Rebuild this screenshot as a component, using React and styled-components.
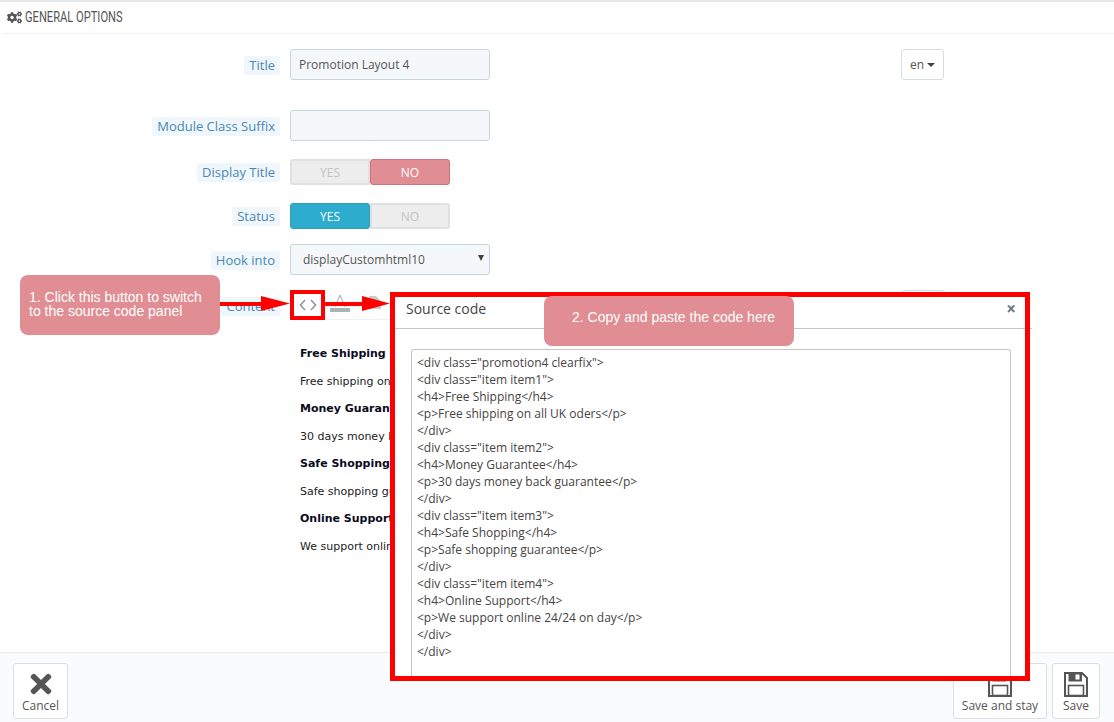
import React from "react";
import styled, { createGlobalStyle } from "styled-components";
import { FaCogs, FaTimes } from "react-icons/fa";

const Global = createGlobalStyle`
  html, body { margin: 0; padding: 0; background: #fff; }
  body { font-family: "Open Sans", "Liberation Sans", sans-serif; overflow: hidden; }
  * { box-sizing: border-box; }
`;

const Page = styled.div`
  position: relative; width: 1114px; height: 722px; overflow: hidden;
  display: flex; flex-direction: column; border-top: 2px solid #e4e8ea;
`;
const Header = styled.div`
  height: 32px; margin-left: 2px; padding-left: 5px; display: flex; align-items: center; gap: 3px;
  border-bottom: 1px solid #eef0f1; color: #555;
`;
const HeaderTitle = styled.span`
  font-family: "Roboto", sans-serif; font-size: 14px; color: #555; display: inline-block;
  transform: scaleX(.795); transform-origin: left center; white-space: nowrap; margin-top: -1px;
`;
const Form = styled.div`
  display: flex; flex-direction: column; padding-top: 15px;
`;
const Row = styled.div`
  display: flex; align-items: center; height: ${(p) => p.$h}px; margin-bottom: ${(p) => p.$mb || 0}px;
`;
const LabelCol = styled.div`
  width: 280px; display: flex; justify-content: flex-end; flex: none; padding-top: ${(p) => p.$top || 0}px;
`;
const Label = styled.span`
  background: #eff7fc; color: #4a87b5; font-size: 13px; line-height: 19px; padding: 0 5px; border-radius: 2px; white-space: nowrap;
`;
const Field = styled.div`
  margin-left: 10px; width: 200px; height: 31px; background: #f4f8fa; border: 1px solid #c7d6db; border-radius: 3px;
  font-size: 12px; color: #555; padding: 0 8px; display: flex; align-items: center; position: relative;
  flex: none;
`;
const SelectField = styled(Field)` padding-left: 12px; `;
const SelectArrow = styled.span`
  position: absolute; right: 5px; top: 10px; width: 0; height: 0;
  border-left: 3px solid transparent; border-right: 3px solid transparent; border-top: 6px solid #444;
`;
const LangBtn = styled.div`
  margin-left: 411px; width: 43px; height: 31px; border: 1px solid #d6dcdf; border-radius: 3px; color: #555; font-size: 12px;
  display: flex; align-items: center; justify-content: center; gap: 3px; background: #fff; flex: none;
`;
const Caret = styled.span`
  width: 0; height: 0; border-left: 4px solid transparent; border-right: 4px solid transparent; border-top: 4px solid #444;
`;
const Toggle = styled.div`
  margin-left: 10px; display: flex; width: 160px; height: 26px; flex: none;
`;
const ToggleOpt = styled.div`
  width: 80px; flex: none; display: flex; align-items: center; justify-content: center; font-size: 12px;
  border-radius: ${(p) => (p.$side === "left" ? "3px 0 0 3px" : "0 3px 3px 0")};
  color: ${(p) => (p.$bg ? "#fff" : "#c3c3c3")};
  background: ${(p) => p.$bg || "#ededed"};
  border: ${(p) => (p.$bg ? `1px solid ${p.$bd}` : "2px solid #e0e0e0")};
  ${(p) => p.$bg && "border-radius: 3px;"}
`;
const Editor = styled.div`
  margin-left: 10px; width: 655px; height: 31px; border-bottom: 1px solid #eef0f1; display: flex; align-items: center; padding-left: 40px; flex: none; gap: 17px;
`;
const LangBtnSmall = styled.div`
  position: absolute; left: 902px; top: 288px; width: 43px; height: 31px; border: 1px solid #d6dcdf; border-radius: 3px;
`;
const Rich = styled.div`
  margin: 27px 0 0 300px; width: 90px; overflow: hidden; font-family: "DejaVu Sans", sans-serif; font-size: 11px; color: #111; display: flex; flex-direction: column;
`;
const RichHead = styled.div` font-weight: 700; line-height: 14px; margin-bottom: 13.5px; color: #0a0a1e; white-space: nowrap;`;
const RichText = styled.div` line-height: 14px; margin-bottom: 13.5px; color: #222; white-space: nowrap; `;
const Footer = styled.div`
  position: absolute; left: 0; right: 0; bottom: 0; height: 70px; background: #fafbfd; border-top: 1px solid #e8eaec;
  padding: 10px 14px 0 13px; display: flex; justify-content: space-between;
`;
const Group = styled.div` display: flex; gap: 5px; `;
const ActionBtn = styled.div`
  width: ${(p) => p.$w}px; height: 56px; background: #fff; border: 1px solid #dcdfe2; border-radius: 3px; display: flex; flex-direction: column;
  align-items: center; color: #555; font-size: 12px; line-height: 16px;
`;
const IconSlot = styled.div`
  height: 30px; margin-top: 5px; margin-bottom: -1px; display: flex; align-items: center; justify-content: center;
`;

const Modal = styled.div`
  position: absolute; left: 390px; top: 290px; width: 640px; height: 389px; background: #fff; border: 5px solid #f00; display: flex; flex-direction: column;
`;
const ModalHead = styled.div`
  height: 32px; flex: none; border-bottom: 1px solid #c5c5c5; display: flex; justify-content: space-between;
  padding: 2px 0 0 11px; font-size: 14px; line-height: 20px; color: #444; position: relative;
  &::after { content: ""; position: absolute; right: -7px; bottom: -1px; width: 2px; height: 1px; background: #c5c5c5; }
`;
const CloseX = styled.span` color: #6b7785; font-weight: 700; font-size: 17px; line-height: 20px; margin-right: 9px; `;
const TextArea = styled.div`
  margin: 20px 0 0 16px; width: 600px; flex: 1; border: 1px solid #c5c5c5; border-bottom: none; border-radius: 3px 3px 0 0;
  padding: 4px 5px; font-size: 12px; line-height: 17px; color: #444; white-space: pre; overflow: hidden;
`;
const Callout = styled.div`
  position: absolute; left: ${(p) => p.$x}px; top: ${(p) => p.$y}px; width: ${(p) => p.$w}px; height: ${(p) => p.$h}px;
  background: #e08e93; border-radius: 8px; color: #fff; font-family: "Liberation Sans", sans-serif; font-size: 14px; line-height: 14px;
  padding: ${(p) => p.$pad};
`;
const ArrowSvg = styled.svg` position: absolute; left: 218px; top: 288px; `;
const RedBox = styled.div`
  position: absolute; left: 290px; top: 288px; width: 35px; height: 30px; border: 4px solid #f00;
  display: flex; align-items: center; justify-content: center;
`;

const SaveIcon = () => (
  <svg width="24" height="25" viewBox="0 0 24 25">
    <path d="M1 1 H18 L23 6 V24 H1 Z" fill="#fff" stroke="#555" strokeWidth="2" />
    <path d="M4.5 1 H18 V9.5 H4.5 Z" fill="#555" />
    <rect x="11.5" y="2.5" width="4" height="5" fill="#fff" />
    <rect x="4.5" y="13.5" width="15" height="10" fill="#fff" stroke="#555" strokeWidth="1.6" />
  </svg>
);

const code = `<div class="promotion4 clearfix">
<div class="item item1">
<h4>Free Shipping</h4>
<p>Free shipping on all UK oders</p>
</div>
<div class="item item2">
<h4>Money Guarantee</h4>
<p>30 days money back guarantee</p>
</div>
<div class="item item3">
<h4>Safe Shopping</h4>
<p>Safe shopping guarantee</p>
</div>
<div class="item item4">
<h4>Online Support</h4>
<p>We support online 24/24 on day</p>
</div>
</div>`;

const rich = [
  ["Free Shipping", "Free shipping on all UK oders"],
  ["Money Guarantee", "30 days money back guarantee"],
  ["Safe Shopping", "Safe shopping guarantee"],
  ["Online Support", "We support online 24/24 on day"],
];

export default function App() {
  return (
    <Page>
      <Global />
      <Header>
        <FaCogs size={15} color="#555" />
        <HeaderTitle>GENERAL OPTIONS</HeaderTitle>
      </Header>
      <Form>
        <Row $h={31} $mb={30}>
          <LabelCol $top={2}><Label>Title</Label></LabelCol>
          <Field>Promotion Layout 4</Field>
          <LangBtn>en<Caret /></LangBtn>
        </Row>
        <Row $h={31} $mb={18}>
          <LabelCol $top={2}><Label>Module Class Suffix</Label></LabelCol>
          <Field />
        </Row>
        <Row $h={26} $mb={18}>
          <LabelCol><Label>Display Title</Label></LabelCol>
          <Toggle>
            <ToggleOpt $side="left">YES</ToggleOpt>
            <ToggleOpt $bg="#e08e93" $bd="#cf7378">NO</ToggleOpt>
          </Toggle>
        </Row>
        <Row $h={26} $mb={15}>
          <LabelCol><Label>Status</Label></LabelCol>
          <Toggle>
            <ToggleOpt $bg="#2eacce" $bd="#2a9fbe">YES</ToggleOpt>
            <ToggleOpt $side="right">NO</ToggleOpt>
          </Toggle>
        </Row>
        <Row $h={31} $mb={14}>
          <LabelCol $top={2}><Label>Hook into</Label></LabelCol>
          <SelectField>displayCustomhtml10<SelectArrow /></SelectField>
        </Row>
        <Row $h={31}>
          <LabelCol $top={4}><Label>Content</Label></LabelCol>
          <Editor>
            <svg width="20" height="22" viewBox="0 0 20 22">
              <path d="M10 2 L5 14 M10 2 L15 14 M7 10 H13" stroke="#b5bec4" strokeWidth="1.4" fill="none" />
              <rect x="0" y="15" width="20" height="4" fill="#a9b4ba" />
            </svg>
            <svg width="16" height="22" viewBox="0 0 16 22">
              <path d="M2 3 H9 L14 8 V16 H2 Z" fill="#c3ccd2" />
            </svg>
          </Editor>
        </Row>
        <Rich>
          {rich.map(([h, t]) => (
            <React.Fragment key={h}>
              <RichHead>{h}</RichHead>
              <RichText>{t}</RichText>
            </React.Fragment>
          ))}
        </Rich>
      </Form>
      <LangBtnSmall />
      <Footer>
        <ActionBtn $w={55}>
          <IconSlot><FaTimes size={30} color="#555" /></IconSlot>
          Cancel
        </ActionBtn>
        <Group>
          <ActionBtn $w={94}>
            <IconSlot><SaveIcon /></IconSlot>
            Save and stay
          </ActionBtn>
          <ActionBtn $w={48}>
            <IconSlot><SaveIcon /></IconSlot>
            Save
          </ActionBtn>
        </Group>
      </Footer>
      <Modal>
        <ModalHead>Source code<CloseX>×</CloseX></ModalHead>
        <TextArea>{code}</TextArea>
      </Modal>
      <ArrowSvg width="175" height="30" viewBox="0 0 175 30">
        <path d="M2 12 H43 V6 L72 13.5 L43 21 V16 H2 Z" fill="#f00" />
        <path d="M107 12 H144 V6 L172 13.5 L144 21 V16 H107 Z" fill="#f00" />
      </ArrowSvg>
      <RedBox>
        <svg width="18" height="12" viewBox="0 0 18 12">
          <path d="M6 1 L1.5 6 L6 11 M12 1 L16.5 6 L12 11" stroke="#8a9aa8" strokeWidth="1.6" fill="none" />
        </svg>
      </RedBox>
      <Callout $x={20} $y={273} $w={200} $h={60} $pad="15px 8px 0 9px">1. Click this button to switch<br />to the source code panel</Callout>
      <Callout $x={544} $y={294} $w={250} $h={50} $pad="14px 0 0 28px">2. Copy and paste the code here</Callout>
    </Page>
  );
}
